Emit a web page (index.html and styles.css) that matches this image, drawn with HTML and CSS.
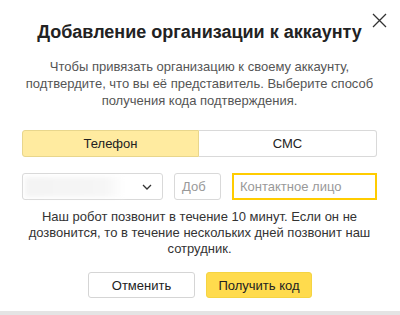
FILE: index.html
```html
<!DOCTYPE html>
<html lang="ru">
<head>
<meta charset="utf-8">
<link rel="stylesheet" href="styles.css">
</head>
<body>
<div class="dialog">
  <button class="close" aria-label="Закрыть">
    <svg width="15" height="15" viewBox="0 0 15 15"><path d="M1 1L14 14M14 1L1 14" stroke="#333" stroke-width="1.3" fill="none"/></svg>
  </button>
  <h1 class="title">Добавление организации к аккаунту</h1>
  <p class="desc">Чтобы привязать организацию к своему аккаунту,<br>подтвердите, что вы её представитель. Выберите способ<br>получения кода подтверждения.</p>
  <div class="tabs">
    <div class="tab tab-active">Телефон</div>
    <div class="tab">СМС</div>
  </div>
  <div class="fields">
    <div class="select">
      <div class="blur"></div>
      <svg class="chev" width="10" height="6" viewBox="0 0 10 6"><path d="M1 1L5 5L9 1" stroke="#333" stroke-width="1.3" fill="none"/></svg>
    </div>
    <div class="input">Доб</div>
    <div class="input input-focus">Контактное лицо</div>
  </div>
  <p class="note">Наш робот позвонит в течение 10 минут. Если он не<br>дозвонится, то в течение нескольких дней позвонит наш<br>сотрудник.</p>
  <div class="actions">
    <button class="btn btn-cancel">Отменить</button>
    <button class="btn btn-primary">Получить код</button>
  </div>
</div>
<div class="bottom"></div>
</body>
</html>
```
FILE: styles.css
```css
html, body {
  margin: 0;
  padding: 0;
  background: #fff;
  font-family: "Liberation Sans", Arial, sans-serif;
}
.dialog {
  position: relative;
  height: 311px;
  box-sizing: border-box;
  padding: 0 23px 0 22px;
  overflow: hidden;
}
.close {
  position: absolute;
  top: 13px;
  right: 13px;
  width: 15px;
  height: 15px;
  padding: 0;
  border: 0;
  background: none;
  display: block;
}
.close svg { display: block; }
.title {
  margin: 0;
  padding-top: 22px;
  font-size: 18px;
  line-height: 21px;
  font-weight: bold;
  color: #222;
  text-align: center;
}
.desc {
  margin: 15px 0 0;
  font-size: 13px;
  line-height: 17px;
  color: #555;
  text-align: center;
}
.tabs {
  margin-top: 21px;
  display: grid;
  grid-template-columns: 177px 1fr;
  height: 27px;
  box-sizing: border-box;
}
.tab {
  display: flex;
  align-items: center;
  justify-content: center;
  font-size: 13px;
  color: #222;
  border: 1px solid #d9d9d9;
  border-left: 0;
  border-radius: 0 3px 3px 0;
}
.tab-active {
  background: #ffeba0;
  border: 1px solid #e8d68c;
  border-radius: 3px 0 0 3px;
}
.fields {
  margin-top: 16px;
  display: grid;
  grid-template-columns: 141px 47px 1fr;
  column-gap: 11px;
  height: 27px;
}
.select, .input {
  box-sizing: border-box;
  border: 1px solid #d9d9d9;
  border-radius: 3px;
  display: flex;
  align-items: center;
}
.select {
  justify-content: space-between;
  padding: 0 10px 0 2px;
}
.blur {
  width: 100px;
  height: 20px;
  background: linear-gradient(90deg, #f4f4f4, #f6f6f6 80%, #fff);
  filter: blur(2px);
}
.chev { display: block; }
.input {
  padding-left: 7px;
  font-size: 13px;
  color: #999;
}
.input-focus {
  border: 2px solid #ffcc00;
  border-radius: 0;
  padding-left: 6px;
}
.note {
  margin: 9px 0 0;
  font-size: 13px;
  line-height: 16px;
  color: #333;
  text-align: center;
}
.actions {
  margin-top: 15px;
  display: flex;
  justify-content: center;
  gap: 11px;
  padding-left: 1px;
}
.btn {
  height: 26px;
  border-radius: 3px;
  font-family: "Liberation Sans", Arial, sans-serif;
  font-size: 13px;
  color: #222;
  padding: 0;
}
.btn-cancel {
  width: 107px;
  background: #fff;
  border: 1px solid #d5d5d5;
}
.btn-primary {
  width: 106px;
  background: #ffdb4d;
  border: 1px solid #f5d442;
}
.bottom {
  height: 4px;
  background: #e4e4e4;
}
```
